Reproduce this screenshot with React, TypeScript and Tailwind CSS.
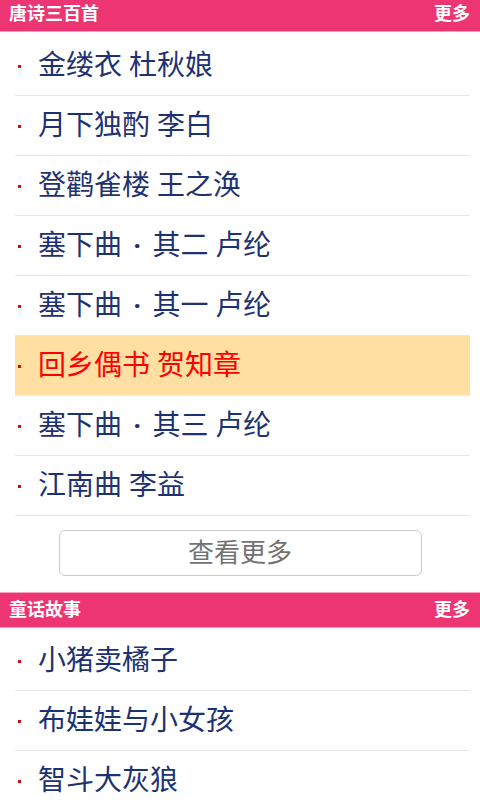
const TANG = [
  '金缕衣 杜秋娘',
  '月下独酌 李白',
  '登鹳雀楼 王之涣',
  '塞下曲|其二 卢纶',
  '塞下曲|其一 卢纶',
  '回乡偶书 贺知章',
  '塞下曲|其三 卢纶',
  '江南曲 李益',
];

const STORIES = ['小猪卖橘子', '布娃娃与小女孩', '智斗大灰狼'];

function SectionHeader({ title, first }: { title: string; first?: boolean }) {
  return (
    <div
      className={`flex items-center justify-between h-[36px] bg-[#ee3573] border-y border-[#f6a2bf] pl-[9px] pr-[10px] ${first ? '-mt-[4px]' : ''}`}
    >
      <span className="text-[18px] font-bold text-white leading-none">{title}</span>
      <span className="text-[18px] font-bold text-white leading-none">更多</span>
    </div>
  );
}

function Title({ text }: { text: string }) {
  const parts = text.split('|');
  if (parts.length === 1) return <>{text}</>;
  return (
    <>
      {parts[0]} <span className="mx-[4px] font-bold">·</span> {parts[1]}
    </>
  );
}

function Row({ text, active }: { text: string; active?: boolean }) {
  return (
    <div
      className={`flex items-center h-[60px] pt-[1px] border-b ${active ? 'bg-[#ffe0a2] border-[#ffebc0]' : 'border-[#e6e6e6]'}`}
    >
      <span className="ml-[3px] w-[3px] h-[3px] bg-[#c4101c]" />
      <span className={`ml-[17px] text-[28px] leading-none ${active ? 'text-[#ff0000]' : 'text-[#1d3272]'}`}>
        <Title text={text} />
      </span>
    </div>
  );
}

export default function App() {
  return (
    <div
      className="w-[480px] h-[800px] overflow-hidden bg-white"
      style={{ fontFamily: 'Roboto, "Noto Sans CJK SC", sans-serif' }}
    >
      <SectionHeader title="唐诗三百首" first />
      <div className="ml-[15px] mr-[10px] pt-[4px]">
        {TANG.map((t, i) => (
          <Row key={t + i} text={t} active={i === 5} />
        ))}
      </div>
      <div className="flex justify-center pt-[14px] pb-[16px]">
        <button className="w-[363px] h-[46px] border border-[#cbcbcb] rounded-[6px] text-[26px] leading-none text-[#727272] bg-white">
          查看更多
        </button>
      </div>
      <SectionHeader title="童话故事" />
      <div className="ml-[15px] mr-[10px] pt-[3px]">
        {STORIES.map((t) => (
          <Row key={t} text={t} />
        ))}
      </div>
    </div>
  );
}
